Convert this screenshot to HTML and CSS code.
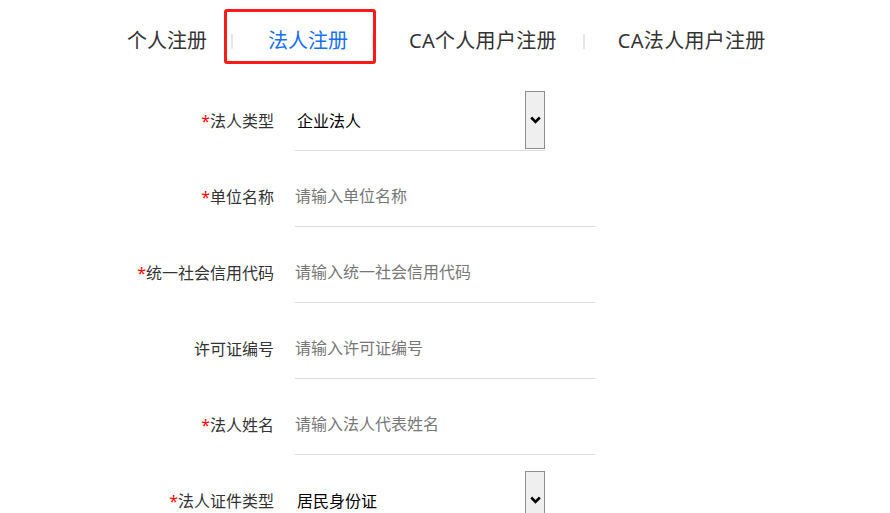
FILE: index.html
```html
<!DOCTYPE html>
<html lang="zh-CN">
<head>
<meta charset="utf-8">
<title>法人注册</title>
<link rel="stylesheet" href="styles.css">
</head>
<body>
<nav class="tabs">
  <span class="tab">个人注册</span>
  <span class="sep"></span>
  <span class="tab active">法人注册</span>
  <span class="sep"></span>
  <span class="tab ca">CA个人用户注册</span>
  <span class="sep wide"></span>
  <span class="tab ca">CA法人用户注册</span>
</nav>
<form class="form">
  <div class="row">
    <label class="label"><i>*</i>法人类型</label>
    <div class="select"><span class="value">企业法人</span><span class="arrow"><svg width="11" height="8" viewBox="0 0 11 8"><path d="M1.2 1.5 L5.5 5.8 L9.8 1.5" fill="none" stroke="#000" stroke-width="2.6"/></svg></span></div>
  </div>
  <div class="row">
    <label class="label"><i>*</i>单位名称</label>
    <input class="input" placeholder="请输入单位名称">
  </div>
  <div class="row">
    <label class="label"><i>*</i>统一社会信用代码</label>
    <input class="input" placeholder="请输入统一社会信用代码">
  </div>
  <div class="row">
    <label class="label">许可证编号</label>
    <input class="input" placeholder="请输入许可证编号">
  </div>
  <div class="row">
    <label class="label"><i>*</i>法人姓名</label>
    <input class="input" placeholder="请输入法人代表姓名">
  </div>
  <div class="row last">
    <label class="label"><i>*</i>法人证件类型</label>
    <div class="select"><span class="value">居民身份证</span><span class="arrow"><svg width="11" height="8" viewBox="0 0 11 8"><path d="M1.2 1.5 L5.5 5.8 L9.8 1.5" fill="none" stroke="#000" stroke-width="2.6"/></svg></span></div>
  </div>
</form>
</body>
</html>
```
FILE: styles.css
```css
html, body {
  margin: 0;
  padding: 0;
  background: #fff;
  height: 513px;
  overflow: hidden;
}
body {
  font-family: "Noto Sans", "Noto Sans CJK SC", sans-serif;
  color: #333;
}
.tabs {
  display: flex;
  align-items: center;
  height: 82px;
  padding-left: 127px;
}
.tab {
  font-size: 20px;
  line-height: 28px;
  color: #333;
  white-space: nowrap;
  position: relative;
}
.tab.ca {
  letter-spacing: 0.3px;
}
.tab.active {
  color: #1670f5;
}
.tab.active::after {
  content: "";
  position: absolute;
  left: -44px;
  top: -18px;
  width: 146px;
  height: 49px;
  border: 3px solid #ff1a1a;
  border-radius: 3px;
}
.sep {
  width: 2px;
  height: 15px;
  background: #e6e6e6;
  margin: 0 35px 0 24px;
}
.sep.wide {
  margin: 0 33px 0 26px;
}
.form {
  padding-top: 9px;
  margin: 0;
}
.row {
  display: flex;
  align-items: center;
  height: 60px;
  margin-bottom: 16px;
}
.row.last {
  margin-bottom: 0;
}
.label {
  width: 274px;
  text-align: right;
  font-size: 16px;
  color: #333;
  margin-right: 21px;
  padding-bottom: 2px;
}
.label i {
  font-style: normal;
  color: #f00;
}
.input {
  box-sizing: border-box;
  width: 300px;
  height: 60px;
  border: none;
  border-bottom: 1px solid #dcdcdc;
  padding: 0 0 2px 0;
  font-family: inherit;
  font-size: 16px;
  color: #333;
  outline: none;
}
.input::placeholder {
  color: #777;
}
.select {
  box-sizing: border-box;
  width: 250px;
  height: 60px;
  border-bottom: 1px solid #dcdcdc;
  display: flex;
  align-items: center;
  justify-content: space-between;
}
.value {
  padding-left: 2px;
  padding-bottom: 2px;
  font-size: 16px;
  color: #000;
}
.arrow {
  box-sizing: border-box;
  align-self: flex-start;
  width: 20px;
  height: 58px;
  border: 1px solid #8d8d8d;
  background: #efefef;
  display: flex;
  align-items: center;
  justify-content: center;
}
.arrow svg {
  display: block;
}
```
